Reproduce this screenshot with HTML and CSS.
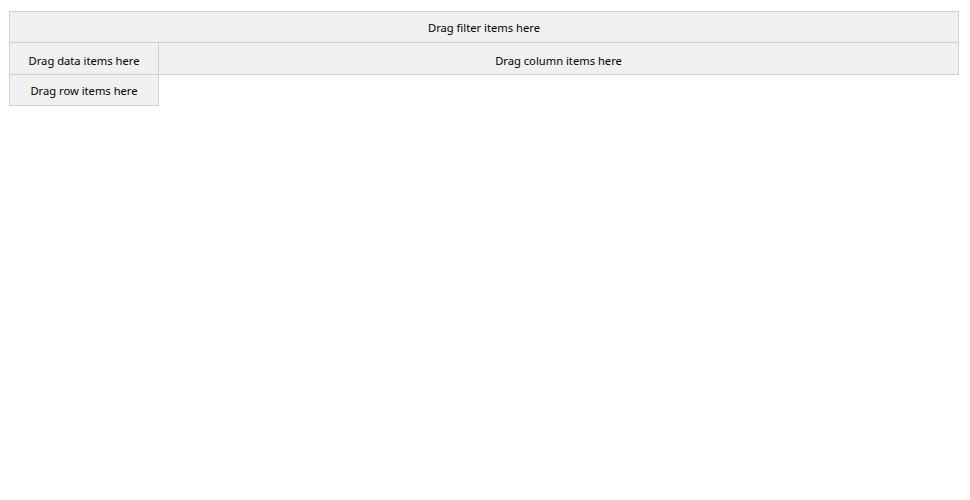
FILE: index.html
```html
<!DOCTYPE html>
<html lang="en">
<head>
    <meta charset="UTF-8">
    <title>Pivot Grid</title>
    <link rel="stylesheet" href="styles.css">
</head>
<body>
    <div class="pivot">
        <div class="area filter-area">Drag filter items here</div>
        <div class="area data-area">Drag data items here</div>
        <div class="area column-area">Drag column items here</div>
        <div class="area row-area">Drag row items here</div>
    </div>
</body>
</html>
```

FILE: styles.css
```css
* { box-sizing: border-box; margin: 0; padding: 0; }
body {
    font-family: 'Noto Sans', 'Open Sans', sans-serif;
    font-size: 11.2px;
    color: #000;
    background-color: #fff;
}
.pivot {
    display: grid;
    grid-template-columns: 150px 800px;
    grid-template-rows: 32px 32px 31px;
    margin: 11px 0 0 9px;
    width: 950px;
}
.area {
    background-color: #f0f0f0;
    border: 1px solid #d0d0d0;
    display: flex;
    align-items: center;
    justify-content: center;
    white-space: nowrap;
}
.filter-area {
    grid-column: 1 / -1;
}
.data-area {
    margin-top: -1px;
    padding-top: 3px;
}
.column-area {
    margin-top: -1px;
    margin-left: -1px;
    padding-top: 3px;
}
.row-area {
    margin-top: -1px;
    padding-top: 1px;
}
```
